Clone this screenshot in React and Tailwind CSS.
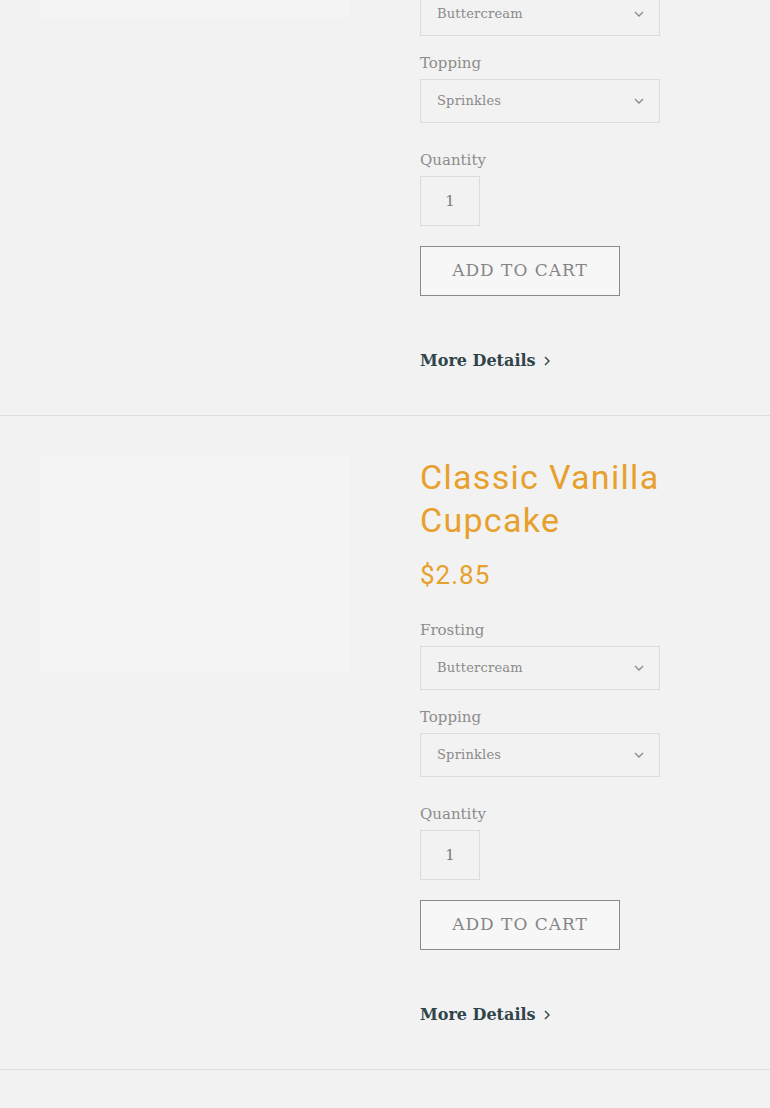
import React from "react";

const slab = { fontFamily: '"DejaVu Serif", "Liberation Serif", serif' };
const sans = { fontFamily: 'Roboto, "Liberation Sans", sans-serif' };

function Chevron({ className }) {
  return (
    <svg className={className} width="10" height="6" viewBox="0 0 10 6" fill="none">
      <path d="M1 1l4 4 4-4" stroke="#8a8a8a" strokeWidth="1.3" />
    </svg>
  );
}

function Option({ label, value }) {
  return (
    <div className="flex flex-col">
      <label className="text-[15px] leading-6 text-[#8c8c8c]" style={slab}>
        {label}
      </label>
      <div className="mt-1 flex h-[44px] w-[240px] items-center justify-between border border-[#dcdcdc] pl-4 pr-[15px]">
        <span className="text-[13px] tracking-[0.2px] text-[#8a8a8a]" style={slab}>
          {value}
        </span>
        <Chevron />
      </div>
    </div>
  );
}

function Product({ name, price }) {
  return (
    <section className="flex border-b border-[#dedede] pt-10 pb-[41px]">
      <div className="ml-10 h-[216px] w-[310px] bg-[#f4f4f4]" />
      <div className="ml-[70px] flex flex-col">
        <h2 className="text-[34px] leading-[43px] tracking-[1.3px] text-[#e8a02c]" style={sans}>
          {name}
        </h2>
        <p className="mt-[17px] text-[26px] leading-8 tracking-[1px] text-[#e8a02c]" style={sans}>
          {price}
        </p>
        <div className="mt-[27px] flex flex-col gap-[15px]">
          <Option label="Frosting" value="Buttercream" />
          <Option label="Topping" value="Sprinkles" />
        </div>
        <label className="mt-[25px] text-[15px] leading-6 text-[#8c8c8c]" style={slab}>
          Quantity
        </label>
        <div className="mt-1 flex h-[50px] w-[60px] items-center justify-center border border-[#dcdcdc] text-[15px] text-[#7a7a7a]" style={slab}>
          1
        </div>
        <button className="mt-5 h-[50px] w-[200px] border border-[#8a8a8a] bg-[#f7f7f7] text-[17px] tracking-[1px] text-[#858585]" style={slab}>
          ADD TO CART
        </button>
        <a className="mt-[52px] flex items-center gap-2 text-[16px] font-bold leading-[26px] text-[#2f4549]" style={slab}>
          More Details
          <svg width="6" height="10" viewBox="0 0 6 10" fill="none">
            <path d="M1 1l4 4-4 4" stroke="#2f4549" strokeWidth="1.4" />
          </svg>
        </a>
      </div>
    </section>
  );
}

export default function App() {
  return (
    <div className="min-h-[1108px] overflow-hidden bg-[#f2f2f2]">
      <div className="-mt-[238px]">
        <Product name={<>Classic Vanilla<br />Cupcake</>} price="$2.85" />
        <Product name={<>Classic Vanilla<br />Cupcake</>} price="$2.85" />
      </div>
    </div>
  );
}
